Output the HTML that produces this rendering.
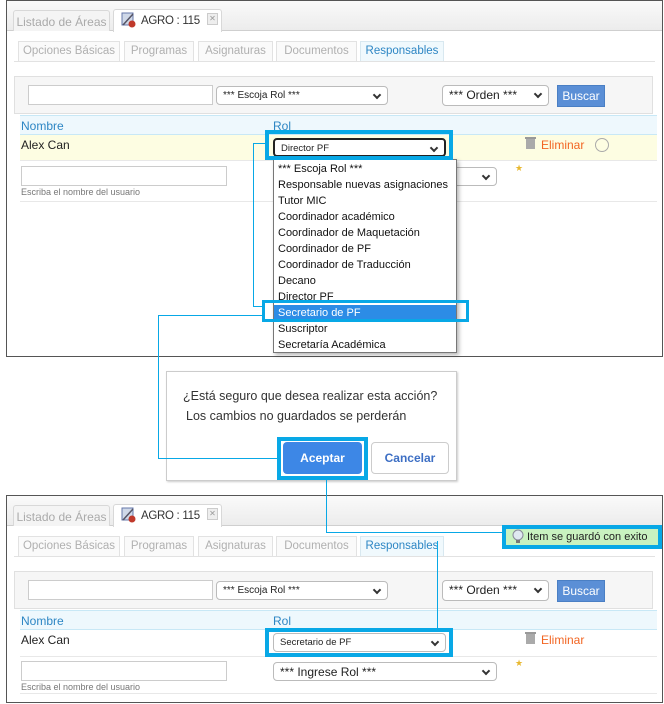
<!DOCTYPE html>
<html><head><meta charset="utf-8"><style>
*{box-sizing:border-box;margin:0;padding:0}
body{width:664px;height:704px;background:#fff;position:relative;overflow:hidden;font-family:"Liberation Sans","DejaVu Sans",sans-serif;font-size:11px;color:#222}
.a{position:absolute;white-space:nowrap}
.panel{position:absolute;left:6px;width:657px;border:1px solid #555;background:#fff}
.hdr{position:absolute;left:0;top:0;width:655px;height:30px;background:linear-gradient(#fafafa,#ececec);border-bottom:1px solid #cfcfcf}
.tab{position:absolute;border:1px solid #d8d8d8;border-bottom:none;border-radius:3px 3px 0 0;color:#aaa;font-size:12px;padding-top:4px;text-align:center;background:#f4f4f4;white-space:nowrap}
.agro{left:106px;top:8px;width:109px;height:23px;background:#fff;color:#333;text-align:left;padding-left:27px;font-size:11.5px;letter-spacing:-0.3px;padding-top:5px}
.stab{position:absolute;top:40px;height:20px;border:1px solid #e2e2e2;border-bottom:none;color:#b0b0b0;font-size:11.5px;text-align:center;padding-top:3px;background:#fafafa;white-space:nowrap}
.sel{position:absolute;border:1px solid #bbb;border-radius:4px;background:#fff;font-size:10px;padding:3px 6px;color:#222;white-space:nowrap}
.sel:after{content:"";position:absolute;right:7px;top:5px;width:4px;height:4px;border-right:2px solid #333;border-bottom:2px solid #333;transform:rotate(45deg)}
.inp{position:absolute;border:1px solid #ccc;background:#fff}
.blue{color:#2d86c4}
.frame{position:absolute;border:4px solid #08a8e6;z-index:5}
.ln{position:absolute;background:#08a8e6;z-index:5}
.x{left:200px;top:12px;width:11px;height:12px;border:1px solid #ccc;background:#eee;color:#999;font-size:8px;text-align:center;line-height:10px}
.dd div{height:16px;padding-left:4px;font-size:11px;line-height:16px;color:#111;white-space:nowrap}
</style></head><body>

<!-- TOP PANEL -->
<div class="panel" style="top:0;height:357px">
 <div class="hdr"></div>
 <div class="tab" style="left:6px;top:9px;width:97px;height:21px">Listado de Áreas</div>
 <div class="tab agro">AGRO : 115</div>
 <svg class="a" style="left:114px;top:11px" width="16" height="16"><rect x="1" y="1" width="11" height="12" fill="#cfd8e8" stroke="#6677aa"/><path d="M2 13 L12 2" stroke="#556" stroke-width="1.5"/><circle cx="11" cy="12" r="3.5" fill="#c0392b"/></svg>
 <div class="a x">✕</div>
 <div class="stab" style="left:11px;width:102px">Opciones Básicas</div>
 <div class="stab" style="left:117px;width:70px">Programas</div>
 <div class="stab" style="left:191px;width:75px">Asignaturas</div>
 <div class="stab" style="left:269px;width:81px">Documentos</div>
 <div class="stab" style="left:353px;width:84px;background:#f0f9fd;color:#2d86c4;border-color:#d8e8f0">Responsables</div>
 <div class="a" style="left:7px;top:60px;width:641px;height:1px;background:#e2e2e2"></div>
 <div class="a" style="left:7px;top:75px;width:639px;height:38px;background:#f6f6f6;border:1px solid #e0e0e0"></div>
 <div class="inp" style="left:21px;top:84px;width:185px;height:20px"></div>
 <div class="sel" style="left:209px;top:85px;width:172px;height:19px">*** Escoja Rol ***</div>
 <div class="sel" style="left:435px;top:84px;width:107px;height:21px;font-size:12px;padding-top:2px">*** Orden ***</div>
 <div class="a" style="left:550px;top:84px;width:48px;height:22px;background:#5b8fd6;border:1px solid #4a7fc4;color:#fff;font-size:12px;text-align:center;line-height:20px">Buscar</div>
 <div class="a" style="left:13px;top:114px;width:637px;height:20px;background:#eef8fd;border-top:1px solid #c8e8f6;border-bottom:1px solid #c8e8f6"></div>
 <div class="a blue" style="left:14px;top:118px;font-size:12px">Nombre</div>
 <div class="a blue" style="left:266px;top:118px;font-size:12px">Rol</div>
 <div class="a" style="left:13px;top:134px;width:637px;height:26px;background:#fdfde2;border-bottom:1px solid #e8e8e8"></div>
 <div class="a" style="left:14px;top:137px;font-size:12px">Alex Can</div>
 <div class="sel" style="left:266px;top:137px;width:173px;height:19px;border:2px solid #222;font-size:9.5px">Director PF</div>
 <svg class="a" style="left:517px;top:135px" width="13" height="14"><rect x="2" y="3" width="9" height="10" fill="#aaa"/><rect x="1" y="1" width="11" height="2" fill="#999"/></svg>
 <div class="a" style="left:534px;top:137px;color:#f26522;font-size:12px">Eliminar</div>
 <div class="a" style="left:588px;top:137px;width:14px;height:14px;border:1px solid #aaa;border-radius:50%"></div>
 <div class="inp" style="left:14px;top:165px;width:206px;height:20px"></div>
 <div class="a" style="left:14px;top:186px;font-size:9px;color:#777">Escriba el nombre del usuario</div>
 <div class="sel" style="left:266px;top:166px;width:224px;height:19px"></div>
 <div class="a" style="left:508px;top:162px;color:#e8b830;font-size:9px">★</div>
 <div class="a" style="left:13px;top:200px;width:637px;height:1px;background:#e8e8e8"></div>
 <div class="a dd" style="left:266px;top:158px;width:184px;height:194px;border:1px solid #777;background:#fff;box-shadow:2px 2px 4px rgba(0,0,0,.3);padding-top:1px;overflow:hidden">
  <div>*** Escoja Rol ***</div><div>Responsable nuevas asignaciones</div><div>Tutor MIC</div><div>Coordinador académico</div><div>Coordinador de Maquetación</div><div>Coordinador de PF</div><div>Coordinador de Traducción</div><div>Decano</div><div>Director PF</div><div style="background:#2c8ce6;color:#fff">Secretario de PF</div><div>Suscriptor</div><div>Secretaría Académica</div>
 </div>
</div>

<div class="frame" style="left:265px;top:130px;width:188px;height:30px"></div>
<div class="frame" style="left:262px;top:300px;width:207px;height:22px;border-width:3px"></div>
<div class="ln" style="left:253px;top:143px;width:13px;height:1px"></div>
<div class="ln" style="left:253px;top:143px;width:1px;height:163px"></div>
<div class="ln" style="left:253px;top:306px;width:10px;height:1px"></div>
<div class="ln" style="left:158px;top:315px;width:105px;height:1px"></div>
<div class="ln" style="left:158px;top:315px;width:1px;height:143px"></div>
<div class="ln" style="left:158px;top:458px;width:120px;height:1px"></div>

<!-- DIALOG -->
<div class="a" style="left:166px;top:371px;width:291px;height:110px;border:1px solid #ccc;background:#fff;box-shadow:1px 1px 2px rgba(0,0,0,.2)"></div>
<div class="a" style="left:183px;top:389px;font-size:12.5px;color:#333">¿Está seguro que desea realizar esta acción?</div>
<div class="a" style="left:186px;top:409px;font-size:12.5px;color:#333">Los cambios no guardados se perderán</div>
<div class="frame" style="left:277px;top:437px;width:91px;height:43px"></div>
<div class="a" style="left:283px;top:442px;width:79px;height:32px;background:#3d87e6;border-radius:4px;color:#fff;font-weight:bold;font-size:12px;text-align:center;line-height:32px;z-index:6">Aceptar</div>
<div class="a" style="left:371px;top:442px;width:78px;height:32px;border:1px solid #ccc;border-radius:4px;color:#3d6fc4;font-weight:bold;font-size:12px;text-align:center;line-height:30px">Cancelar</div>
<div class="ln" style="left:326px;top:480px;width:1px;height:53px"></div>
<div class="ln" style="left:326px;top:532px;width:177px;height:1px"></div>

<!-- BOTTOM PANEL -->
<div class="panel" style="top:495px;height:208px">
 <div class="hdr"></div>
 <div class="tab" style="left:6px;top:9px;width:97px;height:21px">Listado de Áreas</div>
 <div class="tab agro">AGRO : 115</div>
 <svg class="a" style="left:114px;top:11px" width="16" height="16"><rect x="1" y="1" width="11" height="12" fill="#cfd8e8" stroke="#6677aa"/><path d="M2 13 L12 2" stroke="#556" stroke-width="1.5"/><circle cx="11" cy="12" r="3.5" fill="#c0392b"/></svg>
 <div class="a x">✕</div>
 <div class="stab" style="left:11px;top:40px;width:102px">Opciones Básicas</div>
 <div class="stab" style="left:117px;top:40px;width:70px">Programas</div>
 <div class="stab" style="left:191px;top:40px;width:75px">Asignaturas</div>
 <div class="stab" style="left:269px;top:40px;width:81px">Documentos</div>
 <div class="stab" style="left:353px;top:40px;width:84px;background:#f0f9fd;color:#2d86c4;border-color:#d8e8f0">Responsables</div>
 <div class="a" style="left:7px;top:60px;width:641px;height:1px;background:#e2e2e2"></div>
 <div class="a" style="left:7px;top:75px;width:639px;height:38px;background:#f6f6f6;border:1px solid #e0e0e0"></div>
 <div class="inp" style="left:21px;top:84px;width:185px;height:20px"></div>
 <div class="sel" style="left:209px;top:85px;width:172px;height:19px">*** Escoja Rol ***</div>
 <div class="sel" style="left:435px;top:84px;width:107px;height:21px;font-size:12px;padding-top:2px">*** Orden ***</div>
 <div class="a" style="left:550px;top:84px;width:48px;height:22px;background:#5b8fd6;border:1px solid #4a7fc4;color:#fff;font-size:12px;text-align:center;line-height:20px">Buscar</div>
 <div class="a" style="left:13px;top:114px;width:637px;height:20px;background:#eef8fd;border-top:1px solid #c8e8f6;border-bottom:1px solid #c8e8f6"></div>
 <div class="a blue" style="left:14px;top:118px;font-size:12px">Nombre</div>
 <div class="a blue" style="left:266px;top:118px;font-size:12px">Rol</div>
 <div class="a" style="left:13px;top:160px;width:637px;height:1px;background:#e8e8e8"></div>
 <div class="a" style="left:14px;top:137px;font-size:12px">Alex Can</div>
 <div class="sel" style="left:266px;top:137px;width:173px;height:19px;font-size:9.5px">Secretario de PF</div>
 <svg class="a" style="left:517px;top:135px" width="13" height="14"><rect x="2" y="3" width="9" height="10" fill="#aaa"/><rect x="1" y="1" width="11" height="2" fill="#999"/></svg>
 <div class="a" style="left:534px;top:137px;color:#f26522;font-size:12px">Eliminar</div>
 <div class="inp" style="left:14px;top:165px;width:206px;height:20px"></div>
 <div class="a" style="left:14px;top:186px;font-size:9px;color:#777">Escriba el nombre del usuario</div>
 <div class="sel" style="left:266px;top:166px;width:224px;height:19px;font-size:12px;padding-top:2px">*** Ingrese Rol ***</div>
 <div class="a" style="left:508px;top:162px;color:#e8b830;font-size:9px">★</div>
 <div class="a" style="left:13px;top:197px;width:637px;height:1px;background:#e8e8e8"></div>
</div>

<div class="frame" style="left:265px;top:628px;width:188px;height:29px"></div>
<div class="ln" style="left:437px;top:541px;width:1px;height:88px"></div>
<div class="frame" style="left:502px;top:525px;width:160px;height:24px"></div>
<div class="a" style="left:506px;top:529px;width:152px;height:16px;background:#c9f2c0;font-size:11px;color:#222;padding-left:21px;line-height:16px;z-index:6">Item se guardó con exito</div>
<svg class="a" style="left:512px;top:529px;z-index:7" width="12" height="16"><circle cx="6" cy="6" r="5" fill="#dfe8f0" stroke="#889"/><rect x="4" y="11" width="4" height="3" fill="#777"/></svg>
</body></html>
